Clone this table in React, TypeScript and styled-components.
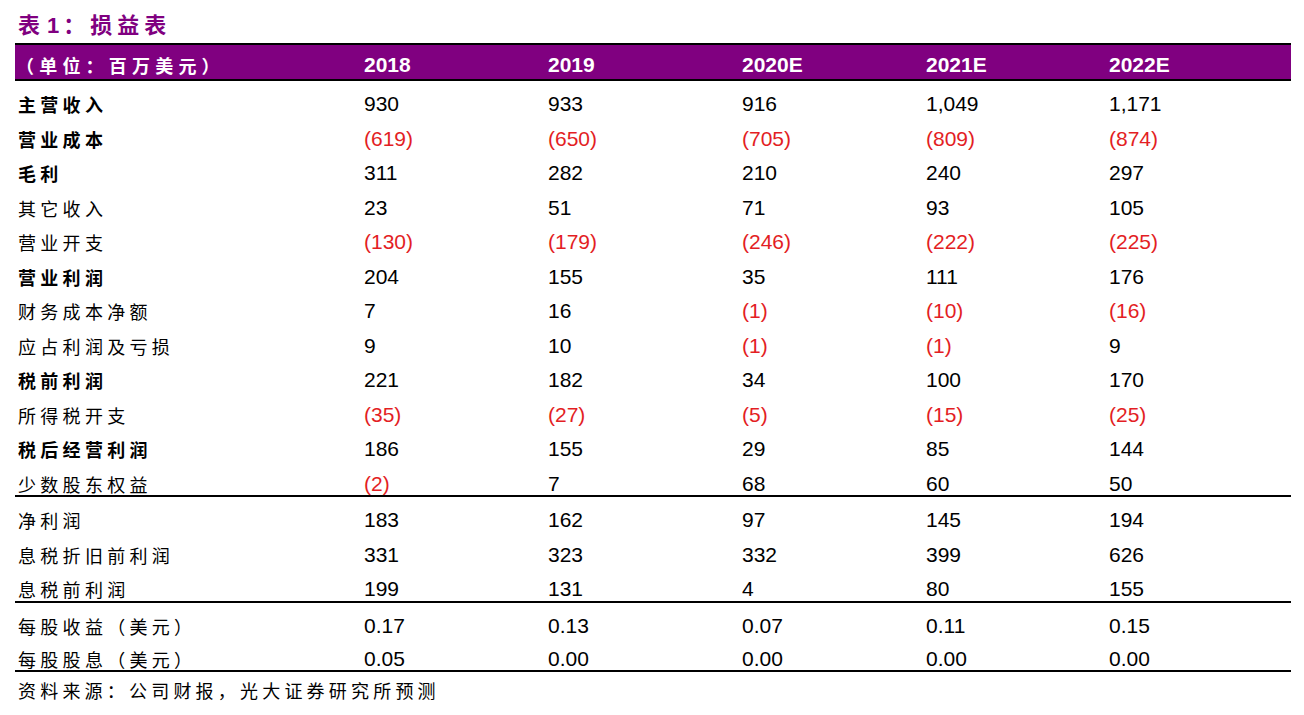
import React from "react";
import styled, { createGlobalStyle } from "styled-components";

const GlobalStyle = createGlobalStyle`
  body {
    margin: 0;
    background: #ffffff;
  }
`;

const PURPLE = "#800080";
const RED = "#e31e24";
const CJK = `"Noto Sans CJK SC", "Noto Sans", sans-serif`;
const NUM = `"Liberation Sans", Arial, "Noto Sans CJK SC", sans-serif`;

const cols = "349px 184px 194px 184px 183px 1fr";

const Page = styled.div`
  width: 1276px;
  margin-left: 15px;
`;

const Title = styled.h1`
  margin: 0;
  height: 43px;
  box-sizing: border-box;
  padding: 10px 0 0 3px;
  font-family: ${CJK};
  font-size: 22px;
  line-height: 26px;
  font-weight: 700;
  letter-spacing: 5px;
  color: ${PURPLE};

  span {
    font-family: ${NUM};
    letter-spacing: 0;
    margin: 0 4px 0 2px;
  }
`;

const HeaderRow = styled.div`
  display: grid;
  grid-template-columns: ${cols};
  height: 38px;
  box-sizing: border-box;
  padding-top: 9px;
  background: ${PURPLE};
  border-top: 2px solid #000;
  border-bottom: 2px solid #000;
  color: #ffffff;
`;

const HeadLabel = styled.div`
  font-family: ${CJK};
  font-size: 18px;
  line-height: 22px;
  font-weight: 700;
  letter-spacing: 5.2px;
  padding-left: 1px;
`;

const HeadYear = styled.div`
  font-family: ${NUM};
  font-size: 21px;
  line-height: 22px;
  font-weight: 700;
`;

const Group = styled.div<{ $rowHeight: number }>`
  border-bottom: 2px solid #000;

  & > div {
    height: ${(p) => p.$rowHeight}px;
  }
`;

const Row = styled.div`
  display: grid;
  grid-template-columns: ${cols};
  box-sizing: border-box;
  padding-top: 12px;
`;

const Label = styled.div<{ $bold?: boolean }>`
  padding-left: 3px;
  font-family: ${CJK};
  font-size: 18px;
  line-height: 22px;
  letter-spacing: 4.3px;
  font-weight: ${(p) => (p.$bold ? 700 : 400)};
  color: #000;
`;

const Value = styled.div<{ $neg?: boolean }>`
  font-family: ${NUM};
  font-size: 21px;
  line-height: 22px;
  color: ${(p) => (p.$neg ? RED : "#000")};
`;

const Source = styled.div`
  padding: 7px 0 0 3px;
  font-family: ${CJK};
  font-size: 18px;
  line-height: 22px;
  letter-spacing: 4.2px;
  color: #000;
`;

type Line = { label: string; bold?: boolean; values: string[] };

const years = ["2018", "2019", "2020E", "2021E", "2022E"];

const groups: { rowHeight: number; lines: Line[] }[] = [
  {
    rowHeight: 34.5,
    lines: [
      { label: "主营收入", bold: true, values: ["930", "933", "916", "1,049", "1,171"] },
      { label: "营业成本", bold: true, values: ["(619)", "(650)", "(705)", "(809)", "(874)"] },
      { label: "毛利", bold: true, values: ["311", "282", "210", "240", "297"] },
      { label: "其它收入", values: ["23", "51", "71", "93", "105"] },
      { label: "营业开支", values: ["(130)", "(179)", "(246)", "(222)", "(225)"] },
      { label: "营业利润", bold: true, values: ["204", "155", "35", "111", "176"] },
      { label: "财务成本净额", values: ["7", "16", "(1)", "(10)", "(16)"] },
      { label: "应占利润及亏损", values: ["9", "10", "(1)", "(1)", "9"] },
      { label: "税前利润", bold: true, values: ["221", "182", "34", "100", "170"] },
      { label: "所得税开支", values: ["(35)", "(27)", "(5)", "(15)", "(25)"] },
      { label: "税后经营利润", bold: true, values: ["186", "155", "29", "85", "144"] },
      { label: "少数股东权益", values: ["(2)", "7", "68", "60", "50"] },
    ],
  },
  {
    rowHeight: 34.67,
    lines: [
      { label: "净利润", values: ["183", "162", "97", "145", "194"] },
      { label: "息税折旧前利润", values: ["331", "323", "332", "399", "626"] },
      { label: "息税前利润", values: ["199", "131", "4", "80", "155"] },
    ],
  },
  {
    rowHeight: 33.5,
    lines: [
      { label: "每股收益（美元）", values: ["0.17", "0.13", "0.07", "0.11", "0.15"] },
      { label: "每股股息（美元）", values: ["0.05", "0.00", "0.00", "0.00", "0.00"] },
    ],
  },
];

export default function App() {
  return (
    <Page>
      <GlobalStyle />
      <Title>
        表<span>1</span>：损益表
      </Title>
      <HeaderRow>
        <HeadLabel>（单位：百万美元）</HeadLabel>
        {years.map((y) => (
          <HeadYear key={y}>{y}</HeadYear>
        ))}
      </HeaderRow>
      {groups.map((g, gi) => (
        <Group key={gi} $rowHeight={g.rowHeight}>
          {g.lines.map((line) => (
            <Row key={line.label}>
              <Label $bold={line.bold}>{line.label}</Label>
              {line.values.map((v, i) => (
                <Value key={i} $neg={v.startsWith("(")}>
                  {v}
                </Value>
              ))}
            </Row>
          ))}
        </Group>
      ))}
      <Source>资料来源：公司财报，光大证券研究所预测</Source>
    </Page>
  );
}
